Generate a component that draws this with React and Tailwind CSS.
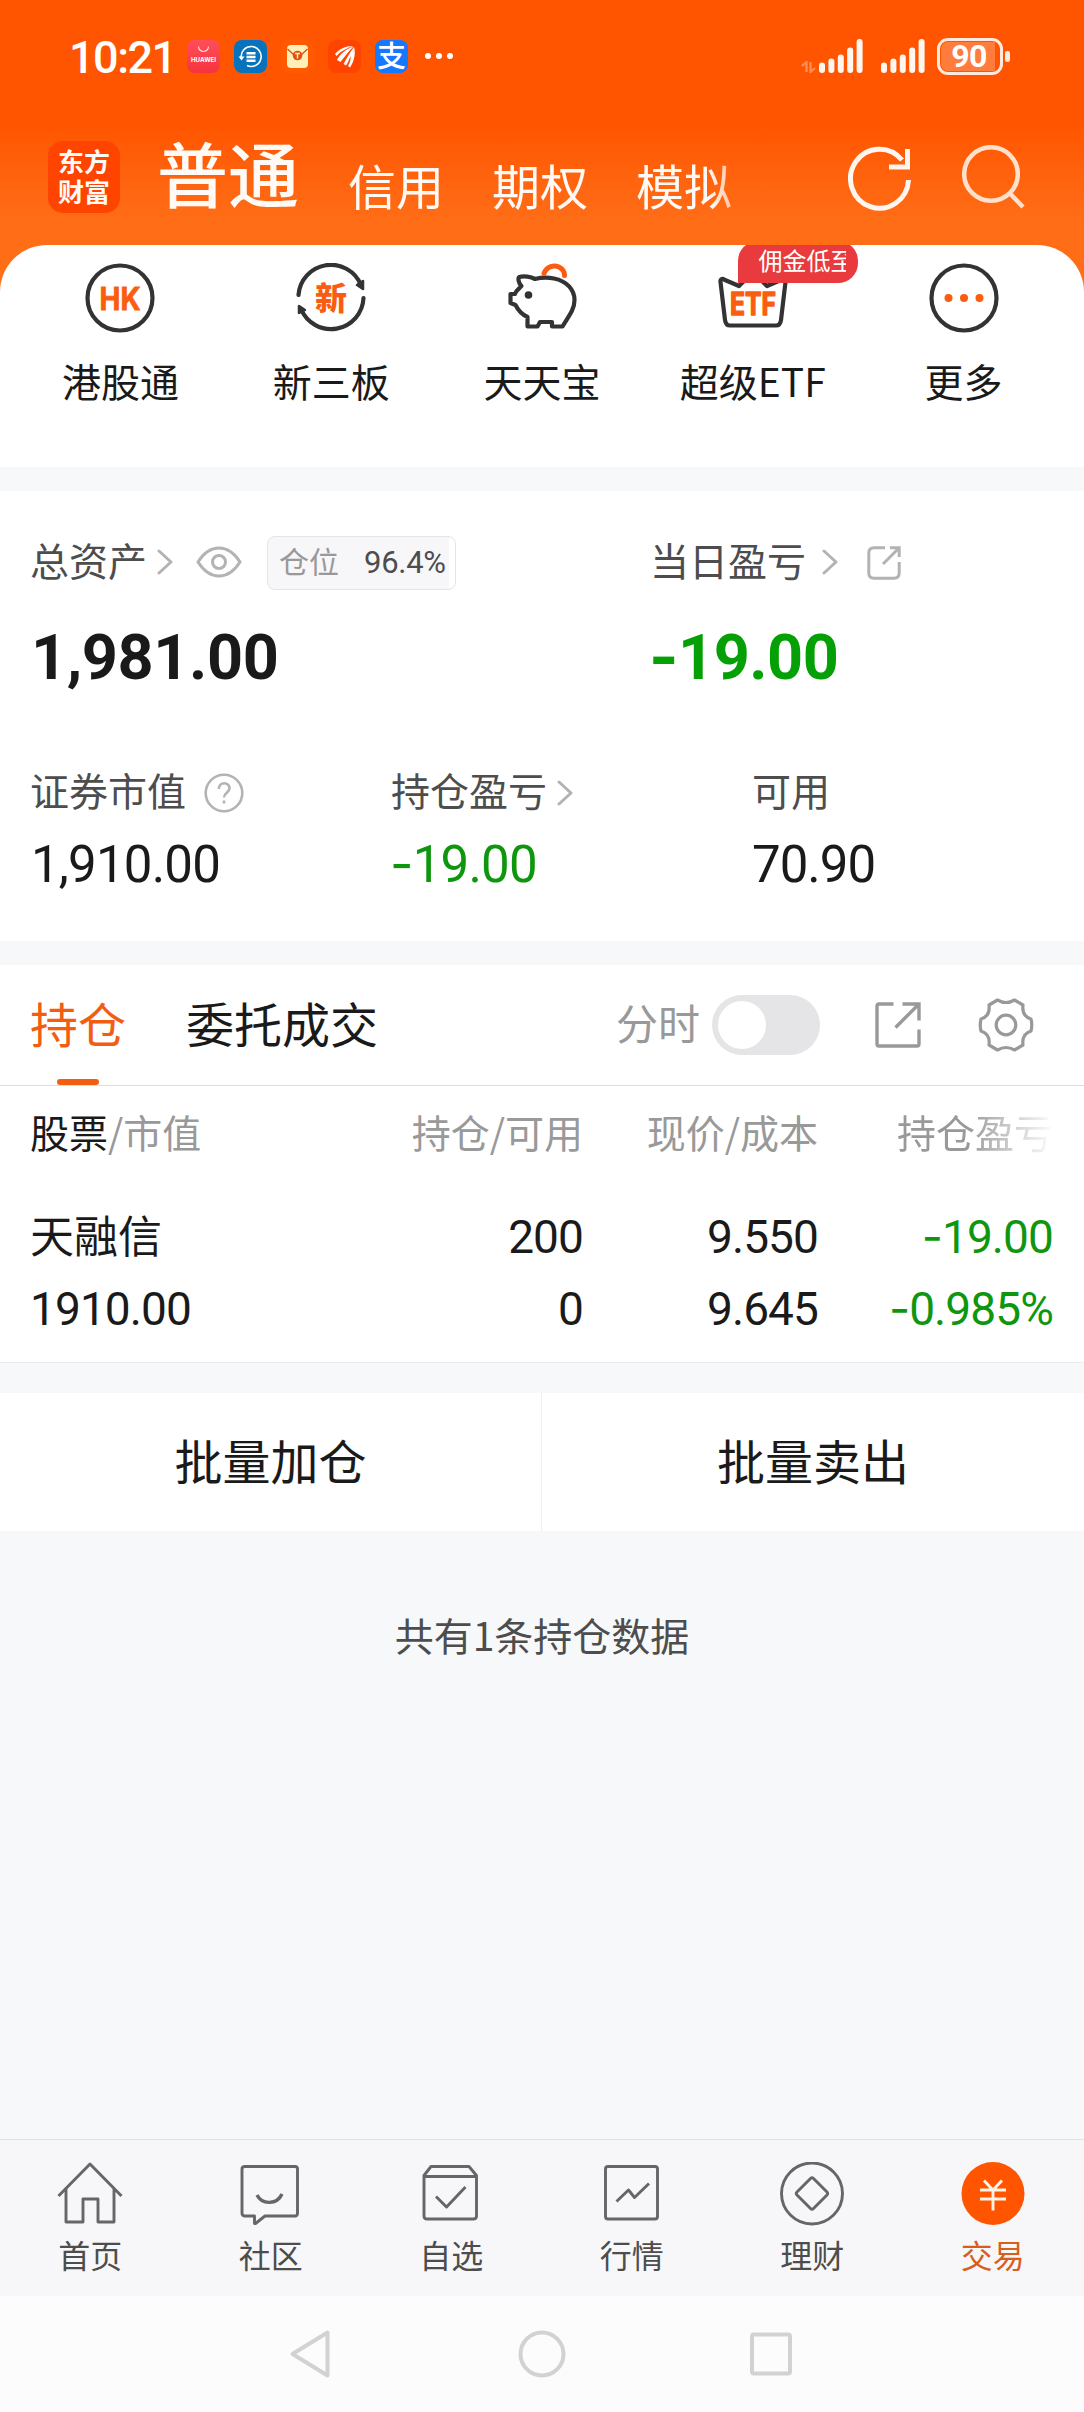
import React, { useState } from "react";

const ink = "text-[#1a1a1a]";
const down = "text-[#0f960f]";

// numbers are set in Roboto, the minus sign is wider than Roboto's own
const Num = ({ children, className = "" }) => {
  const negative = children.startsWith("-");
  return (
    <span className={`block whitespace-nowrap font-['Roboto',sans-serif] ${className}`}>
      {negative && <span className="font-['Inter'] leading-none">-</span>}
      {negative ? children.slice(1) : children}
    </span>
  );
};

const Chevron = () => (
  <svg width="16" height="26" viewBox="0 0 16 26" fill="none" stroke="#b3b3b3" strokeWidth="3" strokeLinecap="round" strokeLinejoin="round">
    <path d="M2 2 L14 13 L2 24" />
  </svg>
);

const AppBadge = ({ className, children }) => (
  <div className={`w-[33px] h-[33px] rounded-[8px] overflow-hidden ${className}`}>
    <svg width="33" height="33" viewBox="0 0 33 33" fill="none">
      {children}
    </svg>
  </div>
);

const Signal = () => (
  <svg width="44" height="34" viewBox="0 0 44 34" fill="#fff6ef">
    <rect x="0" y="23.5" width="6" height="10.5" rx="3" />
    <rect x="9.4" y="19.5" width="6" height="14.5" rx="3" />
    <rect x="18.8" y="15.5" width="6" height="18.5" rx="3" />
    <rect x="28.2" y="8.5" width="6" height="25.5" rx="3" />
    <rect x="37.6" y="0" width="6" height="34" rx="3" />
  </svg>
);

const StatusBar = () => (
  <div className="flex items-center h-[112px] pl-[69px] pr-[74px] text-white">
    <Num className="w-[118px] text-[45px] leading-none font-medium tracking-[-1.5px] mt-[2px]">10:21</Num>
    <div className="flex gap-[14px]">
      <AppBadge className="bg-linear-to-b from-[#ff4e58] to-[#f5333f]">
        <path d="M11.5 6.5 a5 5 0 0 0 10 0" stroke="#ffd9db" strokeWidth="1.2" />
        <text x="16.5" y="21.5" textAnchor="middle" fontSize="6.2" fontWeight="700" fontFamily="Inter" fill="#fff">HUAWEI</text>
      </AppBadge>
      <AppBadge className="bg-[#0873bd]">
        <path d="M7.2 17.5 A10 10 0 1 1 13 25.6" stroke="#fff" strokeWidth="1.6" />
        <path d="M4.5 16.5 h6 l-3 4z" fill="#fff" />
        <path d="M12.5 13.2 h9 M12.5 17 h9 M12.5 20.8 h9" stroke="#fff" strokeWidth="2.4" />
      </AppBadge>
      <AppBadge className="bg-[#ff5a00]">
        <rect x="6" y="5" width="21" height="23" rx="4" fill="#ffefb8" />
        <path d="M6.5 9 L13 15 M26.5 9 L20 15" stroke="#d9541a" strokeWidth="1.3" />
        <circle cx="16.5" cy="15.5" r="4.8" fill="#e0500f" />
        <path d="M14 13.5 h5 M16.5 13.5 v5" stroke="#ffefb8" strokeWidth="1.4" />
      </AppBadge>
      <AppBadge className="bg-[#ff4400]">
        <path d="M7 14 C11 9 17 6 25 6 C19 8 13 11 8.500 16z M9 20 C12 14 18 9 25.500 6.500 C21 11 17 16 12.500 22z M15.500 24 C19 18 22 12 26 7 C28 13 26 22 22 27.500 L20 26 C22 23 23 19 22.500 16 C21 20 20 23 18 25.500z" fill="#fff" />
      </AppBadge>
      <AppBadge className="bg-[#1677ff]">
        <text x="16.5" y="26.5" textAnchor="middle" fontSize="29" fontWeight="500" fill="#fff">支</text>
      </AppBadge>
    </div>
    <div className="flex gap-[5px] ml-[17px]">
      <i className="size-[6px] rounded-full bg-white" />
      <i className="size-[6px] rounded-full bg-white" />
      <i className="size-[6px] rounded-full bg-white" />
    </div>
    <div className="flex items-center ml-auto">
      <svg width="15" height="12" viewBox="0 0 15 12" className="mt-[22px] mr-[3px]" fill="none" stroke="#ff9058" strokeWidth="2.2">
        <path d="M1 5 L5.500 1 V11 M14 7 L9.500 11 V1" />
      </svg>
      <Signal />
      <div className="w-[18px]" />
      <Signal />
      <div className="w-[66px] h-[37px] ml-[12px] rounded-[11px] border-[3px] border-[#ffeadd] p-[1px] pr-[5px]">
        <div className="h-full rounded-l-[7px] bg-[#ff7c3d] flex items-center justify-center pl-[2px]">
          <Num className="text-[32px] leading-none font-bold tracking-[-0.5px]">90</Num>
        </div>
      </div>
      <div className="w-[5px] h-[11px] ml-[2px] rounded-[2px] bg-[#ffeadd]" />
    </div>
  </div>
);

const accounts = ["信用", "期权", "模拟"];

const TopNav = () => (
  <div className="flex h-[133px] pl-[48px] pr-[58px] pt-[29px] text-[#fffaf5]">
    <div className="size-[72px] rounded-[15px] bg-[#ff4400] flex flex-col items-center justify-center pb-[2px] text-[26px] leading-[30px] font-bold">
      <span>东方</span>
      <span>财富</span>
    </div>
    <span className="ml-[37px] text-[71px] leading-[72px] -mt-[6px] font-medium">普通</span>
    <div className="flex gap-[48px] ml-[49px] pt-[13px] text-[48px] leading-[60px] w-[420px] mask-r-from-[362px] mask-r-to-[420px]">
      {accounts.map((name) => (
        <span key={name}>{name}</span>
      ))}
    </div>
    <svg width="66" height="66" viewBox="0 0 66 66" className="ml-auto mt-[4px]" fill="none" stroke="#fff6ef" strokeWidth="5">
      <path d="M60.500 35 A29 29.500 0 1 1 54 15" />
      <path d="M59.500 4 V22 H41" />
    </svg>
    <svg width="64" height="66" viewBox="0 0 64 66" className="ml-[48px] mt-[4px]" fill="none" stroke="#ffe0cb" strokeWidth="4.500">
      <circle cx="29" cy="29" r="26.800" />
      <path d="M47.500 48 L61 62" />
    </svg>
  </div>
);

const shortcuts = [
  {
    name: "港股通",
    icon: (
      <>
        <circle cx="35" cy="35" r="32.500" />
        <text x="35" y="46.500" textAnchor="middle" fontSize="31" fontWeight="700" fontFamily="Inter" textLength="41" lengthAdjust="spacingAndGlyphs" fill="#fb5d10" stroke="#fb5d10" strokeWidth="0.8">HK</text>
      </>
    ),
  },
  {
    name: "新三板",
    icon: (
      <>
        <path d="M2.500 32 A32.500 32.500 0 0 1 65 22" />
        <path d="M67.500 35 A32.500 32.500 0 0 1 5 46" />
        <path d="M61 22 L67 18 V26z M3 43 V50 L9 47z" fill="#333" strokeWidth="2.500" />
        <text x="35" y="47" textAnchor="middle" fontSize="32" fontWeight="900" fill="#fb5d10" stroke="none">新</text>
      </>
    ),
  },
  {
    name: "天天宝",
    icon: (
      <>
        <path d="M14.500 23 C11.500 20 10.500 15 12.500 14 C17 12.500 24 14 28 16 C34 14.500 42 14.500 47 15.500 C60 18 67.500 27 67.500 37 C67.500 47 61 54 55.500 63.500 H45 V59 H33 L30.500 63.500 H20.500 V54 C14 51 11 47 8.500 42 L3.500 40 V31 H8 C9 27 12 26 14.500 23z" />
        <circle cx="21.500" cy="32" r="3.800" fill="#333" stroke="none" />
        <path d="M37 10.500 C40 3 47 2 52 4 C56 6 57.500 9 57.500 12.500" stroke="#fb5d10" strokeWidth="5" />
      </>
    ),
  },
  {
    name: "超级ETF",
    icon: (
      <>
        <path d="M2.500 19 C2 16 4 15 7 17 L21 23 L35 9 L49 23 L63 17 C66 15 68 16 67.500 19 L63 57 C62.500 61 61 62.500 58 62.500 H12 C9 62.500 7.500 61 7 57z" />
        <text x="35" y="51.500" textAnchor="middle" fontSize="31" fontWeight="700" fontFamily="Inter" textLength="46" lengthAdjust="spacingAndGlyphs" fill="#fb5d10" stroke="#fb5d10" strokeWidth="1.400">ETF</text>
      </>
    ),
    tip: "佣金低至",
  },
  {
    name: "更多",
    icon: (
      <>
        <circle cx="35" cy="35" r="32.500" />
        <g fill="#fb5d10" stroke="none">
          <circle cx="19.500" cy="35" r="4" />
          <circle cx="35" cy="35" r="4" />
          <circle cx="50.500" cy="35" r="4" />
        </g>
      </>
    ),
  },
];

const Shortcuts = () => (
  <div className="bg-[#ff6e17]">
    <div className="grid grid-cols-5 h-[222px] pl-[15px] pr-[15px] pt-[18px] rounded-t-[47px] bg-white overflow-hidden">
      {shortcuts.map((item) => (
        <div key={item.name} className="relative flex flex-col items-center">
          <svg width="70" height="70" viewBox="0 0 70 70" fill="none" stroke="#333" strokeWidth="4.200" strokeLinejoin="round" strokeLinecap="round">
            {item.icon}
          </svg>
          <span className={`mt-[18px] text-[39px] leading-[58px] ${ink}`}>{item.name}</span>
          {item.tip && (
            <div className="absolute left-[91px] -top-[22px] w-[120px] h-[42px] pl-[20px] pr-[12px] rounded-[20px] rounded-bl-none bg-[#e93b3d] text-white">
              <div className="w-[88px] overflow-hidden whitespace-nowrap text-[24px] leading-[38px]">{item.tip}</div>
            </div>
          )}
        </div>
      ))}
    </div>
  </div>
);

const Assets = () => (
  <section className="h-[450px] bg-white px-[30px] pt-[42px] text-[#4d4d4d] text-[39px] leading-[58px]">
    <div className="flex">
      <div className="w-[620px]">
        <div className="flex items-center h-[58px]">
          <span className="mb-[6px]">总资产</span>
          <span className="ml-[10px]"><Chevron /></span>
          <svg width="46" height="32" viewBox="0 0 46 32" className="ml-[23px]" fill="none" stroke="#b3b3b3" strokeWidth="3">
            <path d="M2 16 C9 5 16 2 23 2 C30 2 37 5 44 16 C37 27 30 30 23 30 C16 30 9 27 2 16z" />
            <circle cx="23" cy="16" r="6.500" />
          </svg>
          <div className="flex items-center h-[54px] w-[189px] ml-[25px] mt-px rounded-[8px] border border-[#e4e4e6] bg-linear-to-r from-[#f7f7f9] from-[181px] to-white to-[181px] pl-[11px]">
            <span className="mb-[5px] text-[30px] leading-none text-[#999]">仓位</span>
            <Num className="ml-[25px] text-[31px] leading-none tracking-[-0.3px]">96.4%</Num>
          </div>
        </div>
        <Num className={`mt-[27px] ml-[1px] text-[63px] leading-[80px] font-bold tracking-[-0.4px] ${ink}`}>1,981.00</Num>
      </div>
      <div>
        <div className="flex items-center h-[58px]">
          <span className="mb-[6px]">当日盈亏</span>
          <span className="ml-[16px]"><Chevron /></span>
          <svg width="34" height="34" viewBox="0 0 34 34" className="ml-[29px] mt-[2px]" fill="none" stroke="#b3b3b3" strokeWidth="3">
            <path d="M18 1.800 H7 Q1.800 1.800 1.800 7 V27 Q1.800 32.200 7 32.200 H27 Q32.200 32.200 32.200 27 V16" />
            <path d="M16 18 L32 2 M23 1.800 H32.200 V11" />
          </svg>
        </div>
        <Num className="mt-[27px] -ml-px text-[63px] leading-[80px] font-bold tracking-[-0.5px] text-[#05a005]">-19.00</Num>
      </div>
    </div>
    <div className="flex mt-[65px]">
      <div className="w-[361px]">
        <div className="flex items-center h-[60px]">
          <span className="mb-[9px]">证券市值</span>
          <svg width="40" height="40" viewBox="0 0 40 40" className="ml-[18px]" fill="none" stroke="#b3b3b3" strokeWidth="2.600">
            <circle cx="20" cy="20" r="18.300" />
            <path d="M14.800 16 C14.800 8.500 25.500 8.500 25.500 15.500 C25.500 19.500 20 19.500 20 24.500 M20 27.500 V30.500" />
          </svg>
        </div>
        <Num className={`ml-px text-[51px] leading-[84px] tracking-[-0.8px] ${ink}`}>1,910.00</Num>
      </div>
      <div className="w-[361px]">
        <div className="flex items-center h-[60px]">
          <span className="mb-[9px]">持仓盈亏</span>
          <span className="ml-[10px]"><Chevron /></span>
        </div>
        <Num className={`-ml-px text-[51px] leading-[84px] tracking-[-0.8px] ${down}`}>-19.00</Num>
      </div>
      <div>
        <div className="flex items-center h-[60px] pb-[9px]">可用</div>
        <Num className={`text-[51px] leading-[84px] tracking-[-1px] ${ink}`}>70.90</Num>
      </div>
    </div>
  </section>
);

const cols = "grid grid-cols-[315px_238px_235px_1fr] pl-[30px] pr-[31px]";

const Holdings = () => {
  const [tab, setTab] = useState("持仓");
  const [chart, setChart] = useState(false);

  return (
    <section className="h-[398px] mt-[24px] bg-white border-b border-[#ececee]">
      <div className="flex items-center h-[121px] pl-[30px] pr-[50px] border-b border-[#dedede] text-[48px]">
        {["持仓", "委托成交"].map((name) => (
          <button
            key={name}
            onClick={() => setTab(name)}
            className={`relative h-[120px] mr-[60px] pb-[6px] leading-[114px] ${tab === name ? "text-[#f25d12]" : ink}`}
          >
            {name}
            {tab === name && (
              <i className="absolute left-[27px] bottom-0 w-[42px] h-[6px] rounded-full bg-[#f25d12]" />
            )}
          </button>
        ))}
        <span className="ml-auto mb-[6px] text-[42px] leading-none text-[#999]">分时</span>
        <button
          onClick={() => setChart(!chart)}
          className={`flex w-[108px] h-[60px] ml-[12px] p-[6px] rounded-full bg-[#e5e5e7] ${chart ? "justify-end" : ""}`}
        >
          <i className="size-[48px] rounded-full bg-white" />
        </button>
        <svg width="46" height="46" viewBox="0 0 46 46" className="ml-[55px]" fill="none" stroke="#999" strokeWidth="3.400">
          <path d="M18.500 2 H4 Q2 2 2 4 V42 Q2 44 4 44 H42 Q44 44 44 42 V27.500" strokeLinejoin="round" />
          <path d="M20.500 25.500 L43 3 M27.500 2 H44 V18.500" />
        </svg>
        <svg width="56" height="56" viewBox="0 0 56 56" className="ml-[57px]" fill="none" stroke="#999" strokeWidth="3.200" strokeLinejoin="round">
          <path d="M19.500 3 Q28 8 36.500 3 L45 8 Q43.500 19 53 22 Q54.500 28 53 34 Q43.500 37 45 48 L36.500 53 Q28 48 19.500 53 L11 48 Q12.500 37 3 34 Q1.500 28 3 22 Q12.500 19 11 8z" />
          <circle cx="28" cy="28" r="9.800" />
        </svg>
      </div>

      <div className={`${cols} h-[100px] text-[39px] leading-[91px] text-[#999]`}>
        <span><span className={ink}>股票</span>/市值</span>
        <span className="text-right">持仓/可用</span>
        <span className="text-right">现价/成本</span>
        <span className="justify-self-end whitespace-nowrap mask-r-from-[70px] mask-r-to-[158px]">持仓盈亏</span>
      </div>

      <div className={`${cols} pt-[15px] text-[46px] leading-[72px] tracking-[-0.9px] text-right ${ink}`}>
        <span className="text-left text-[44px] leading-[66px] tracking-normal">天融信</span>
        <Num>200</Num>
        <Num>9.550</Num>
        <Num className={down}>-19.00</Num>
        <Num className="text-left">1910.00</Num>
        <Num>0</Num>
        <Num>9.645</Num>
        <Num className={down}>-0.985%</Num>
      </div>
    </section>
  );
};

const tabs = [
  { name: "首页", icon: <path d="M1.500 34 L33 2 L64.500 34 M9 27 V60 H26 V37 H41 V60 H57 V27" /> },
  {
    name: "社区",
    icon: (
      <>
        <path d="M7 4.500 H57 Q59.500 4.500 59.500 7 V51 Q59.500 54 57 54 H27 L17.500 61.500 Q16.500 62 16.500 61 V54 H7 Q4 54 4 51 V7 Q4 4.500 7 4.500z" />
        <path d="M19 33 C24 43 39 43 44 32" strokeWidth="3.400" />
      </>
    ),
  },
  {
    name: "自选",
    icon: (
      <>
        <path d="M6 13.500 L13 4.500 H51 L58.500 13.500 V54 Q58.500 57 55.500 57 H9 Q6 57 6 54z M6 14.500 H58.500" />
        <path d="M18 34.500 L28.500 45 L47.500 25" />
      </>
    ),
  },
  {
    name: "行情",
    icon: (
      <>
        <rect x="6.500" y="4.500" width="52" height="52.500" rx="2.500" />
        <path d="M17.500 39.500 L29.500 28 L35.500 35.500 L50 21.500" />
      </>
    ),
  },
  {
    name: "理财",
    icon: (
      <>
        <circle cx="33" cy="31.500" r="30.500" />
        <path d="M31.500 16.500 Q33 15 34.500 16.500 L48 30 Q49.500 31.500 48 33 L34.500 46.500 Q33 48 31.500 46.500 L18 33 Q16.500 31.500 18 30z" />
      </>
    ),
  },
  {
    name: "交易",
    active: true,
    icon: (
      <>
        <circle cx="33" cy="31.500" r="31.500" fill="#ff5500" stroke="none" />
        <path d="M24 18.500 L33 28 L42 18.500 M20 28 H46 M20 37 H46 M33 28 V48.500" stroke="#fff3e6" />
      </>
    ),
  },
];

const TabBar = () => (
  <nav className="grid grid-cols-6 h-[157px] border-t border-[#dfe1e5] bg-[#f7f7fa] pt-[22px] pr-px">
    {tabs.map((t) => (
      <div key={t.name} className={`flex flex-col items-center text-[32px] leading-[40px] ${t.active ? "text-[#d85e1c]" : "text-[#4d4d4d]"}`}>
        <svg width="66" height="64" viewBox="0 0 66 64" fill="none" stroke="#666" strokeWidth="2.900" strokeLinejoin="round">
          {t.icon}
        </svg>
        <span className="mt-[8px]">{t.name}</span>
      </div>
    ))}
  </nav>
);

const SystemNav = () => (
  <div className="flex items-center justify-center gap-[182px] h-[116px] bg-[#fcfcfc]">
    <svg width="48" height="50" viewBox="0 0 48 50" fill="none" stroke="#d2d2d2" strokeWidth="4" strokeLinejoin="round">
      <path d="M4.500 25 L39.500 3.500 V46.500z" />
    </svg>
    <svg width="48" height="50" viewBox="0 0 48 50" fill="none" stroke="#d2d2d2" strokeWidth="4">
      <circle cx="24" cy="25" r="21.500" />
    </svg>
    <svg width="48" height="50" viewBox="0 0 48 50" fill="none" stroke="#d2d2d2" strokeWidth="4">
      <rect x="4" y="5.500" width="38" height="39" rx="2" />
    </svg>
  </div>
);

const App = () => {
  return (
    <main className="flex flex-col w-[1084px] h-[2412px] overflow-hidden bg-[#f7f8fa] font-['Noto_Sans_CJK_SC',sans-serif]">
      <header className="h-[245px] shrink-0 bg-linear-to-b from-[#ff5500] from-[125px] to-[#ff6e17] to-[225px]">
        <StatusBar />
        <TopNav />
      </header>
      <Shortcuts />
      <div className="h-[24px]" />
      <Assets />
      <Holdings />

      <div className="grid grid-cols-2 h-[138px] mt-[30px] bg-white text-[48px] leading-[132px] text-center">
        <button className={`pb-[6px] border-r border-[#f0f0f2] ${ink}`}>批量加仓</button>
        <button className={`pb-[6px] ${ink}`}>批量卖出</button>
      </div>
      <p className="mt-[74px] text-center text-[39px] leading-[58px] text-[#4d4d4d]">共有1条持仓数据</p>

      <footer className="mt-auto">
        <TabBar />
        <SystemNav />
      </footer>
    </main>
  );
};

export default App;
